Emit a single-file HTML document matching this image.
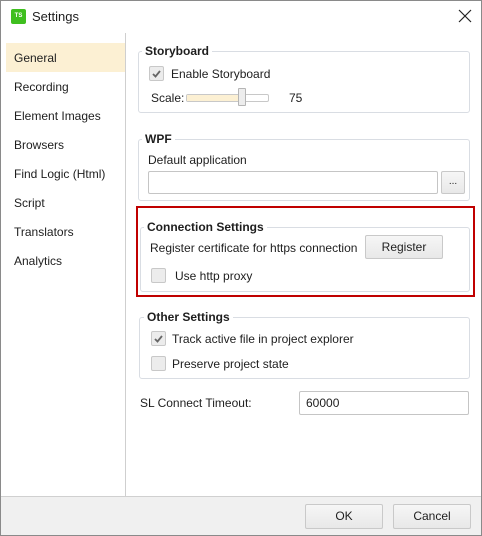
<!DOCTYPE html>
<html><head><style>
*{margin:0;padding:0;box-sizing:border-box}
body{width:482px;height:536px;background:#fff;font-family:"Liberation Sans",sans-serif;font-size:12px;color:#1e1e1e;position:relative;overflow:hidden}
.a{position:absolute}
.t{position:absolute;white-space:nowrap;line-height:14px}
.grp{position:absolute;border:1px solid #d9dde3;border-radius:3px}
.lg{position:absolute;background:#fff;font-weight:bold;padding:0 3px;line-height:14px;white-space:nowrap}
.cb{position:absolute;width:15px;height:15px;border:1px solid #c8c8c8;background:#ececec;border-radius:2px}
.btn{position:absolute;border:1px solid #c9c9c9;background:linear-gradient(#f6f6f6,#e8e8e8);border-radius:2px;text-align:center}
.inp{position:absolute;border:1px solid #c5c5c5;background:#fff;border-radius:2px}
</style></head><body>
<div class="a" style="left:0;top:0;width:482px;height:536px;border:1px solid #8a8a8a"></div>
<div class="a" style="left:11px;top:9px;width:15px;height:15px;background:#3fbf1f;border-radius:2px;color:#fff;font-size:6px;font-weight:bold;text-align:center;line-height:15px">TS</div>
<div class="t" style="left:32px;top:10px;font-size:13px">Settings</div>
<svg class="a" style="left:458px;top:9px" width="14" height="14"><path d="M1 1L13 13M13 1L1 13" stroke="#222" stroke-width="1.2"/></svg>
<div class="a" style="left:125px;top:33px;width:1px;height:463px;background:#cfcfcf"></div>
<div class="a" style="left:6px;top:43px;width:119px;height:29px;background:#fcf0d3"></div>
<div class="t" style="left:14px;top:51px">General</div>
<div class="t" style="left:14px;top:80px">Recording</div>
<div class="t" style="left:14px;top:109px">Element Images</div>
<div class="t" style="left:14px;top:138px">Browsers</div>
<div class="t" style="left:14px;top:167px">Find Logic (Html)</div>
<div class="t" style="left:14px;top:196px">Script</div>
<div class="t" style="left:14px;top:225px">Translators</div>
<div class="t" style="left:14px;top:254px">Analytics</div>

<div class="grp" style="left:138px;top:51px;width:332px;height:62px"></div>
<div class="lg" style="left:142px;top:44px">Storyboard</div>
<div class="cb" style="left:149px;top:66px"></div>
<svg class="a" style="left:149px;top:66px" width="15" height="15"><path d="M4 8L6.5 10.5L11 5" stroke="#666" stroke-width="1.8" fill="none"/></svg>
<div class="t" style="left:171px;top:67px">Enable Storyboard</div>
<div class="t" style="left:151px;top:91px">Scale:</div>
<div class="a" style="left:186px;top:94px;width:83px;height:8px;border:1px solid #c8c8c8;background:#fff;border-radius:2px"></div>
<div class="a" style="left:187px;top:95px;width:53px;height:6px;background:#fcf0d3"></div>
<div class="a" style="left:238px;top:88px;width:8px;height:18px;border:1px solid #b5b5b5;background:#ededed;border-radius:1px"></div>
<div class="t" style="left:289px;top:91px">75</div>

<div class="grp" style="left:138px;top:139px;width:332px;height:62px"></div>
<div class="lg" style="left:142px;top:132px">WPF</div>
<div class="t" style="left:148px;top:153px">Default application</div>
<div class="inp" style="left:148px;top:171px;width:290px;height:23px"></div>
<div class="btn" style="left:441px;top:171px;width:24px;height:23px;line-height:20px;font-size:10px">...</div>

<div class="a" style="left:136px;top:206px;width:339px;height:91px;border:2px solid #c00000"></div>
<div class="grp" style="left:140px;top:227px;width:330px;height:65px"></div>
<div class="lg" style="left:144px;top:220px">Connection Settings</div>
<div class="t" style="left:150px;top:241px">Register certificate for https connection</div>
<div class="btn" style="left:365px;top:235px;width:78px;height:24px;line-height:22px">Register</div>
<div class="cb" style="left:151px;top:268px"></div>
<div class="t" style="left:175px;top:269px">Use http proxy</div>

<div class="grp" style="left:139px;top:317px;width:331px;height:62px"></div>
<div class="lg" style="left:144px;top:310px">Other Settings</div>
<div class="cb" style="left:151px;top:331px"></div>
<svg class="a" style="left:151px;top:331px" width="15" height="15"><path d="M4 8L6.5 10.5L11 5" stroke="#666" stroke-width="1.8" fill="none"/></svg>
<div class="t" style="left:172px;top:332px">Track active file in project explorer</div>
<div class="cb" style="left:151px;top:356px"></div>
<div class="t" style="left:172px;top:357px">Preserve project state</div>

<div class="t" style="left:140px;top:396px">SL Connect Timeout:</div>
<div class="inp" style="left:299px;top:391px;width:170px;height:24px"></div>
<div class="t" style="left:306px;top:396px">60000</div>

<div class="a" style="left:1px;top:496px;width:480px;height:39px;background:#f0f0f0;border-top:1px solid #d0d0d0"></div>
<div class="btn" style="left:305px;top:504px;width:78px;height:25px;line-height:23px">OK</div>
<div class="btn" style="left:393px;top:504px;width:78px;height:25px;line-height:23px">Cancel</div>
</body></html>
